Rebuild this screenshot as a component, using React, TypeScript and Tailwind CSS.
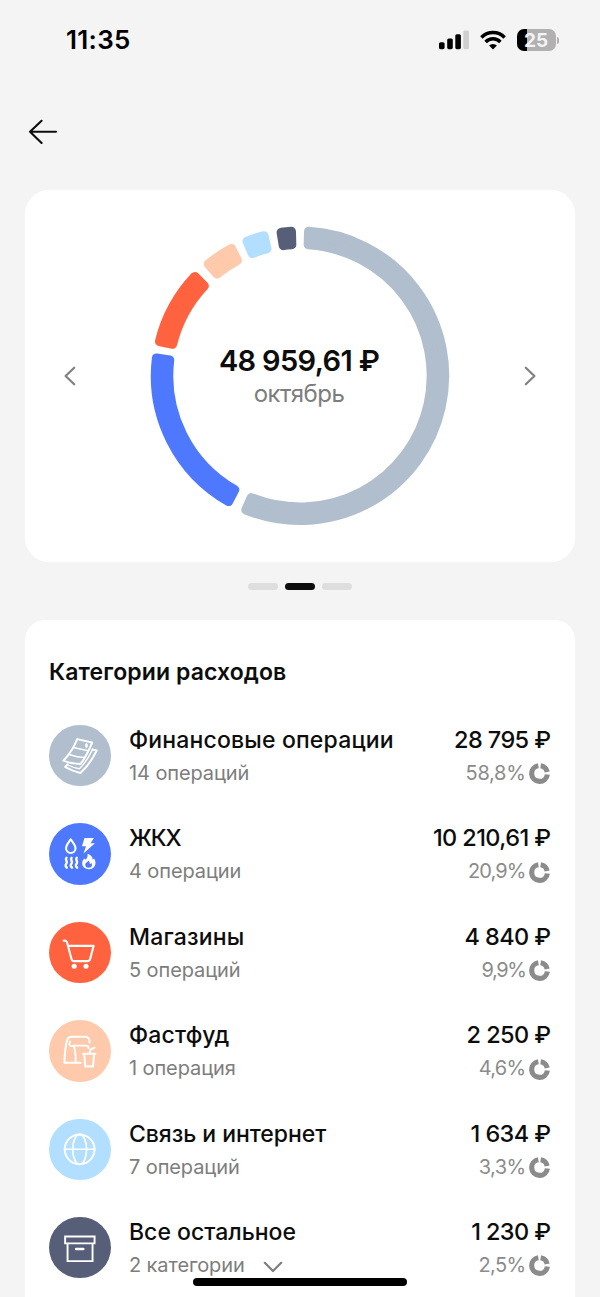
import type { ReactNode } from "react";

type Segment = { from: number; to: number; color: string };

const segments: Segment[] = [
  { from: 1.6, to: 203.8, color: "#b0becd" },
  { from: 207.8, to: 278.9, color: "#4e79ff" },
  { from: 281.9, to: 315.2, color: "#ff623e" },
  { from: 318.8, to: 333.5, color: "#ffcaab" },
  { from: 336.7, to: 347.4, color: "#b2deff" },
  { from: 350.7, to: 358.4, color: "#575e78" },
];

const CORNER = 4.6;
const OUTER = 149.2 - CORNER;
const INNER = 126.7 + CORNER;

function segmentPath({ from, to }: Segment) {
  const rad = Math.PI / 180;
  const point = (r: number, angle: number) =>
    `${(150 + r * Math.sin(angle)).toFixed(2)} ${(149.8 - r * Math.cos(angle)).toFixed(2)}`;
  const o = CORNER / OUTER;
  const i = CORNER / INNER;
  const a = from * rad;
  const b = to * rad;
  const large = to - from > 180 ? 1 : 0;
  return `M${point(OUTER, a + o)}A${OUTER} ${OUTER} 0 ${large} 1 ${point(OUTER, b - o)}L${point(INNER, b - i)}A${INNER} ${INNER} 0 ${large} 0 ${point(INNER, a + i)}Z`;
}

function Donut() {
  return (
    <svg viewBox="0 0 300 300" className="col-start-1 row-start-1 size-[300px]">
      {segments.map((s) => (
        <path key={s.color} d={segmentPath(s)} fill={s.color} stroke={s.color} strokeWidth={CORNER * 2} strokeLinejoin="round" />
      ))}
    </svg>
  );
}

function Icon({ children }: { children: ReactNode }) {
  return (
    <svg viewBox="0 0 61 61" className="size-full" fill="none" stroke="white" strokeWidth="2" strokeLinejoin="round" strokeLinecap="round">
      {children}
    </svg>
  );
}

const MoneyIcon = (
  <Icon>
    <path d="M28 14 42.8 17.4C39.5 25.5 36.2 32 31.4 38.6 26 38.6 20 37.8 14.2 35.4 20 29.5 24.6 22.5 28 14Z" />
    <path d="M25 22.6 39 25.6M20.8 29.4C26 31.2 30.5 32 35 32.2" strokeWidth="1.6" />
    <path d="M37.2 19.4v2" strokeWidth="2.4" />
    <path d="M43.2 24.2 47.4 25.2C43.2 33.8 38.2 41.2 31.2 47.6 25.5 46.4 20.5 44.4 16 41.6L18.4 39" />
    <path d="M18.4 39.4C22.5 41.6 26.2 42.8 30.2 43.4 35.8 37.8 39.6 31.8 43.2 24.4" strokeWidth="1.3" />
  </Icon>
);

const UtilitiesIcon = (
  <Icon>
    <path d="M21.5 16.2C19 19.7 16.9 22.2 16.9 25a4.7 4.7 0 0 0 9.4 0C26.3 22.2 24 19.7 21.5 16.2Z" strokeWidth="2.1" />
    <path d="M35.2 14.8h9.3l-3.3 5.2h4.3L34.2 30.3l2.5-7.3h-4Z" fill="white" stroke="none" />
    <path d="M17.3 34.5c-2 2.2 1.8 3.2 0 5.6s-.8 2.8.4 4.2M22.4 34.5c-2 2.2 1.8 3.2 0 5.6s-.8 2.8.4 4.2M27.5 34.5c-2 2.2 1.8 3.2 0 5.6s-.8 2.8.4 4.2" strokeWidth="2.4" />
    <path d="M38.2 30.5c4 1.5 5.2 3.5 5 6l1.5-1.2c1.5 2.2 1.8 4.8 1 6.6-1 2.7-3.3 3.9-6.2 3.9-3.6 0-6.6-2.4-6.6-5.9 0-2.8 1.3-4.2 2.9-4.8l.2 1.4c1.9-1.4 2.6-3.2 2.2-6Z" fill="white" stroke="none" />
    <path d="M38.8 37.3c.4 1.4-2.8 2-2.8 4a3.3 3 0 0 0 6.6 0v-1.3l-2 .6c-.2-1.4-.7-2.5-1.8-3.3Z" fill="#4e79ff" stroke="none" />
  </Icon>
);

const CartIcon = (
  <Icon>
    <path d="M14.6 18.5h1.2c1.3 0 1.8.6 2.1 1.8L22.3 36.7c.4 1.5 1 2.1 2.5 2.1H38.3c1.5 0 2.1-.5 2.5-2L44.2 23.7H19" strokeWidth="2.1" />
    <circle cx="25" cy="43.8" r="2.5" fill="white" stroke="none" />
    <circle cx="36.7" cy="43.8" r="2.5" fill="white" stroke="none" />
  </Icon>
);

const FastFoodIcon = (
  <Icon>
    <path d="M31.5 42.5H15.3C15.5 35 16.3 25.5 17.9 20c.8-2.5 2-3.4 4.2-3.4H36.2c2.3 0 4 2 4 4.8v.8" />
    <path d="M26.5 42.5C26.5 34 25.2 27 24.4 25.5 20.7 27 19.2 24 21 21.3M24.4 25.5h12.8c1.4 0 2 1 2 2.4" strokeWidth="1.8" />
    <path d="M33.6 33.5h12.3M34.9 33.5l1 12.5h7.8l1-12.5M40.2 33.3l.9-3.9 4-2" />
  </Icon>
);

const GlobeIcon = (
  <Icon>
    <circle cx="30.4" cy="30.1" r="14.8" />
    <ellipse cx="30.4" cy="30.1" rx="6.9" ry="14.8" strokeWidth="1.7" />
    <path d="M15.6 30.1h29.6" strokeWidth="1.5" />
  </Icon>
);

const BoxIcon = (
  <Icon>
    <path d="M16 19.4h29.2v6.8H16ZM18.4 26.2V43.8h24.8V26.2" strokeWidth="1.9" strokeLinejoin="miter" />
    <path d="M27 31.8h7" strokeWidth="2.6" />
  </Icon>
);

type Category = {
  name: string;
  nameClass: string;
  count: string;
  amount: string;
  share: string;
  shareClass: string;
  bg: string;
  icon: ReactNode;
  expandable?: boolean;
};

const categories: Category[] = [
  { name: "Финансовые операции", nameClass: "tracking-[0.17px]", count: "14 операций", amount: "28 795 ₽", share: "58,8%", shareClass: "tracking-[-0.3px]", bg: "bg-[#b0becd]", icon: MoneyIcon },
  { name: "ЖКХ", nameClass: "tracking-[-1.1px]", count: "4 операции", amount: "10 210,61 ₽", share: "20,9%", shareClass: "tracking-[-0.9px]", bg: "bg-[#4e79ff]", icon: UtilitiesIcon },
  { name: "Магазины", nameClass: "tracking-[0.2px]", count: "5 операций", amount: "4 840 ₽", share: "9,9%", shareClass: "tracking-[-1.4px]", bg: "bg-[#ff623e]", icon: CartIcon },
  { name: "Фастфуд", nameClass: "tracking-[0.2px]", count: "1 операция", amount: "2 250 ₽", share: "4,6%", shareClass: "tracking-[-0.7px]", bg: "bg-[#ffcaab]", icon: FastFoodIcon },
  { name: "Связь и интернет", nameClass: "tracking-[-0.05px]", count: "7 операций", amount: "1 634 ₽", share: "3,3%", shareClass: "tracking-[-0.6px]", bg: "bg-[#b2deff]", icon: GlobeIcon },
  { name: "Все остальное", nameClass: "tracking-[0px]", count: "2 категории", amount: "1 230 ₽", share: "2,5%", shareClass: "tracking-[-0.6px]", bg: "bg-[#575e78]", icon: BoxIcon, expandable: true },
];

function ShareIcon() {
  return (
    <svg viewBox="0 0 20 20" className="mt-0.5 size-[21px]" fill="none" stroke="#8b8b8b" strokeWidth="4.9">
      <path d="M11.1 2.6A7.5 7.5 0 0 1 17.3 8.6M17.5 10.9A7.5 7.5 0 1 1 8.9 2.6" />
    </svg>
  );
}

function CategoryRow({ item }: { item: Category }) {
  return (
    <li className="flex h-[98.45px] items-start">
      <div className={`size-[61.5px] shrink-0 rounded-full ${item.bg}`}>{item.icon}</div>
      <div className="ml-[18.5px] flex flex-1 flex-col">
        <span className={`text-[23px] leading-[30px] font-medium whitespace-nowrap ${item.nameClass}`}>{item.name}</span>
        <span className="mt-1 flex items-center text-[20px] leading-7 tracking-[-0.1px] text-[#7d7d7d]">
          {item.count}
          {item.expandable && (
            <svg viewBox="0 0 20 12" className="mt-1 ml-[18px] h-3 w-5" fill="none" stroke="#7d7d7d" strokeWidth="2.2" strokeLinecap="round" strokeLinejoin="round">
              <path d="M1.8 1.8 10 10l8.2-8.2" />
            </svg>
          )}
        </span>
      </div>
      <div className="flex flex-col items-end">
        <span className="pr-[0.6px] text-[23.5px] leading-[30px] font-medium tracking-[-0.6px] whitespace-nowrap">{item.amount}</span>
        <span className="mt-1 flex items-center gap-[3px] pr-[1.5px] text-[20px] leading-7 text-[#8b8b8b]">
          <span className={item.shareClass}>{item.share}</span>
          <ShareIcon />
        </span>
      </div>
    </li>
  );
}

function StatusBar() {
  return (
    <header className="flex h-20 items-center justify-between pr-[41px] pl-[66px] text-black">
      <span className="text-[26px] leading-8 font-semibold tracking-[0.3px]">11:35</span>
      <div className="flex items-center">
        <svg viewBox="0 0 31 20" className="h-5 w-[31px]">
          <rect x="0" y="12.2" width="5.6" height="7" rx="1.6" />
          <rect x="8.2" y="8.5" width="5.6" height="10.7" rx="1.6" />
          <rect x="16.3" y="4.2" width="5.6" height="15" rx="1.6" />
          <rect x="24.3" y="0.5" width="5.6" height="18.7" rx="1.6" fill="#cfcfcf" />
        </svg>
        <svg viewBox="0 0 26 20" className="ml-2.5 h-5 w-[26px]" fill="none" stroke="black" strokeWidth="3.5">
          <path d="M1.4 7.4a16.4 16.4 0 0 1 23.2 0" />
          <path d="M5.6 11.9a10.5 10.5 0 0 1 14.8 0" />
          <path d="M13 19.4 9.1 15.6a5.6 5.6 0 0 1 7.8 0Z" fill="black" stroke="none" />
        </svg>
        <div className="ml-[11px] flex h-[22px] w-[39px] items-center justify-center rounded-[7px] bg-linear-to-r from-black from-26% to-[#b1b1b1] to-26%">
          <span className="text-[19px] leading-none font-bold text-[#f4f4f4]">25</span>
        </div>
        <div className="ml-[1px] h-[7px] w-[2.5px] rounded-r-full bg-[#b1b1b1]" />
      </div>
    </header>
  );
}

export default function App() {
  return (
    <div className="relative h-[1297px] w-[600px] overflow-hidden bg-[#f4f4f4] font-['Inter','Noto_Sans',sans-serif] text-[#0d0d0d]">
      <StatusBar />
      <nav className="flex h-[110px] items-start px-7 pt-[38px]">
        <svg viewBox="0 0 30 28" className="h-7 w-[30px]" fill="none" stroke="currentColor" strokeWidth="2.1" strokeLinecap="round" strokeLinejoin="round">
          <path d="M28 13.8H2M13.6 2.8 2 13.8 13.6 25" />
        </svg>
      </nav>
      <section className="mx-[25px] flex h-[371.5px] items-center justify-between rounded-[24px] bg-white px-[38px]">
        <svg viewBox="0 0 14 20" className="h-5 w-3.5" fill="none" stroke="#808080" strokeWidth="2.2" strokeLinecap="round" strokeLinejoin="round">
          <path d="M11.2 1.7 2.6 10l8.6 8.3" />
        </svg>
        <div className="grid place-items-center">
          <Donut />
          <div className="col-start-1 row-start-1 flex flex-col items-center pt-0.5 pr-0.5">
            <span className="text-[29px] leading-9 font-semibold tracking-[-0.65px] whitespace-nowrap">48 959,61 ₽</span>
            <span className="-mt-px text-[24px] leading-8 tracking-[-0.5px] text-[#7d7d7d]">октябрь</span>
          </div>
        </div>
        <svg viewBox="0 0 14 20" className="h-5 w-3.5" fill="none" stroke="#808080" strokeWidth="2.2" strokeLinecap="round" strokeLinejoin="round">
          <path d="M2.8 1.7 11.4 10l-8.6 8.3" />
        </svg>
      </section>
      <div className="flex h-[58.5px] justify-center gap-[6.3px] pt-[21.5px]">
        <div className="h-[6.5px] w-[30.6px] rounded-full bg-[#dedede]" />
        <div className="h-[6.5px] w-[30.6px] rounded-full bg-[#0d0d0d]" />
        <div className="h-[6.5px] w-[30.6px] rounded-full bg-[#dedede]" />
      </div>
      <section className="mx-[25px] h-[700px] rounded-t-[20px] bg-white px-6 pt-9">
        <h2 className="text-[23px] leading-8 font-semibold tracking-[0.1px]">Категории расходов</h2>
        <ul className="mt-[36.8px]">
          {categories.map((c) => (
            <CategoryRow key={c.name} item={c} />
          ))}
        </ul>
      </section>
      <div className="absolute bottom-[11px] left-[193px] h-2 w-[214px] rounded-full bg-black" />
    </div>
  );
}
